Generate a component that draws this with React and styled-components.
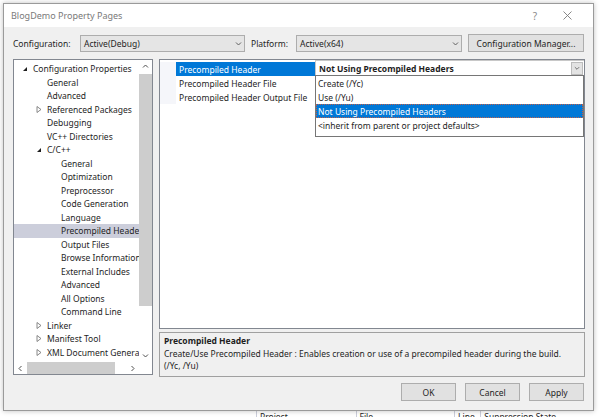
import React from 'react';
import styled, { createGlobalStyle } from 'styled-components';

const GlobalStyle = createGlobalStyle`
  html, body {
    margin: 0;
    padding: 0;
  }
  body {
    width: 600px;
    height: 417px;
    overflow: hidden;
    background: #ffffff;
    font-family: "Noto Sans", "Open Sans", sans-serif;
    color: #1e1e1e;
  }
`;

const Desktop = styled.div`
  position: relative;
  width: 600px;
  height: 417px;
  overflow: hidden;
  background: #ffffff;
  display: flex;
  flex-direction: column;
  justify-content: flex-end;
`;

/* bits of the IDE window behind the dialog */
const ErrorListHeader = styled.div`
  display: flex;
  height: 6px;
  padding-left: 256px;
  font-size: 8.5px;
  line-height: 12px;
  overflow: hidden;
  color: #1e1e1e;
`;

const HeaderCell = styled.div`
  width: ${p => p.w}px;
  padding-left: 3px;
  border-left: 1px solid #cccedb;
  white-space: nowrap;
`;

const Dialog = styled.div`
  position: absolute;
  left: 3px;
  top: 3px;
  width: 589px;
  height: 406px;
  background: #f0f0f0;
  border: 1px solid #9a9a9a;
  box-shadow: 0 0 5px rgba(0, 0, 0, 0.25);
  display: flex;
  flex-direction: column;
  font-size: 8.5px;
`;

const TitleBar = styled.div`
  height: 23px;
  background: #ffffff;
  display: flex;
  align-items: center;
  padding-left: 7px;
  padding-right: 10px;
  color: #7a7a7a;
  font-size: 9px;
`;

const Title = styled.div`
  flex: 1;
`;

const TitleButton = styled.div`
  width: 32px;
  display: flex;
  justify-content: center;
  color: #8a8a8a;
  font-size: 10px;
`;

const Body = styled.div`
  flex: 1;
  display: flex;
  flex-direction: column;
  padding: 7px 8px 0 9px;
`;

const TopRow = styled.div`
  display: flex;
  align-items: center;
  height: 18px;
`;

const Label = styled.div`
  width: ${p => p.w}px;
  margin-left: ${p => p.ml || 0}px;
`;

const Combo = styled.div`
  width: ${p => p.w}px;
  height: 15px;
  box-sizing: content-box;
  border: 1px solid #adadad;
  background: #e5e5e5;
  display: flex;
  align-items: center;
  padding-left: 3px;
`;

const ComboText = styled.div`
  flex: 1;
  white-space: nowrap;
`;

const ComboArrow = styled.div`
  width: 12px;
  display: flex;
  justify-content: center;
  align-items: center;
  color: #606060;
`;

const PushButton = styled.div`
  width: ${p => p.w}px;
  height: 16px;
  border: 1px solid #adadad;
  background: #e1e1e1;
  display: flex;
  align-items: center;
  justify-content: center;
  margin-left: ${p => p.ml || 0}px;
  white-space: nowrap;
`;

const Main = styled.div`
  display: flex;
  gap: 6px;
  margin-top: 7px;
  height: 318px;
`;

const TreePanel = styled.div`
  width: 138px;
  height: 314px;
  border: 1px solid #828790;
  background: #ffffff;
  display: grid;
  grid-template-columns: 125px 13px;
  grid-template-rows: 1fr 12px;
`;

const TreeList = styled.div`
  padding-top: 2px;
  overflow: hidden;
`;

const TreeRow = styled.div`
  height: 13.5px;
  display: flex;
  align-items: center;
  padding-left: ${p => 8 + p.level * 14}px;
  background: ${p => (p.selected ? '#cccedb' : 'transparent')};
  white-space: nowrap;
  color: #1e1e1e;
`;

const Expander = styled.div`
  width: 11px;
  flex-shrink: 0;
  display: flex;
  align-items: center;
`;

const TreeText = styled.span`
  flex-shrink: 0;
`;

const VScroll = styled.div`
  display: flex;
  flex-direction: column;
  align-items: center;
  background: #ffffff;
`;

const ScrollArrow = styled.div`
  height: 13px;
  width: 100%;
  display: flex;
  align-items: center;
  justify-content: center;
`;

const VTrack = styled.div`
  flex: 1;
  width: 100%;
  display: flex;
  flex-direction: column;
`;

const VThumb = styled.div`
  margin-top: 1px;
  height: 232px;
  width: 100%;
  background: #cdcdcd;
`;

const HScroll = styled.div`
  display: flex;
  align-items: stretch;
`;

const HArrow = styled.div`
  width: 13px;
  display: flex;
  align-items: center;
  justify-content: center;
`;

const HTrack = styled.div`
  flex: 1;
  display: flex;
`;

const HThumb = styled.div`
  width: 88px;
  background: #cdcdcd;
`;

const Corner = styled.div`
  background: #ffffff;
`;

const RightColumn = styled.div`
  width: 426px;
  display: flex;
  flex-direction: column;
  gap: 3px;
`;

const GridPanel = styled.div`
  position: relative;
  flex: 1;
  box-sizing: border-box;
  border: 1px solid #828790;
  background: #ffffff;
  padding-top: 2px;
`;

const GridRow = styled.div`
  display: grid;
  grid-template-columns: 16px 139px 1fr;
  height: 14px;
`;

const Gutter = styled.div`
  background: #f5f6fa;
`;

const NameCell = styled.div`
  display: flex;
  align-items: center;
  padding-left: 3px;
  background: ${p => (p.selected ? '#0078d7' : '#ffffff')};
  color: ${p => (p.selected ? '#ffffff' : '#1e1e1e')};
  white-space: nowrap;
  overflow: hidden;
`;

const ValueCell = styled.div`
  display: flex;
  align-items: center;
  border: ${p => (p.editing ? '1px solid #c8c8c8' : 'none')};
  border-right: none;
  margin-top: ${p => (p.editing ? '-2px' : '0')};
  padding-left: 3px;
  font-weight: ${p => (p.editing ? 700 : 400)};
`;

const DropButton = styled.div`
  width: 10px;
  height: 11px;
  margin-right: 1px;
  border: 1px solid #bcbcbc;
  background: #e3e3e3;
  display: flex;
  align-items: center;
  justify-content: center;
`;

const DropList = styled.div`
  position: absolute;
  left: 155px;
  top: 15px;
  width: 267px;
  height: 58px;
  border: 1px solid #767676;
  background: #ffffff;
  padding-bottom: 2px;
`;

const DropItem = styled.div`
  height: 14px;
  display: flex;
  align-items: center;
  padding-left: 2px;
  background: ${p => (p.selected ? '#0078d7' : '#ffffff')};
  color: ${p => (p.selected ? '#ffffff' : '#1e1e1e')};
  outline: ${p => (p.selected ? '1px dotted #c0604a' : 'none')};
  outline-offset: -1px;
  white-space: nowrap;
`;

const DescPanel = styled.div`
  height: 45px;
  box-sizing: border-box;
  border: 1px solid #a0a0a0;
  background: #f0f0f0;
  padding: 2px 4px;
  line-height: 12.5px;
  white-space: nowrap;
`;

const DescTitle = styled.div`
  font-weight: 700;
`;

const Footer = styled.div`
  display: flex;
  justify-content: flex-end;
  gap: 9px;
  padding: 6px 1px 0 0;
`;

const Chevron = ({ dir = 'down', size = 7, color = '#606060' }) => {
  const paths = {
    down: 'M1 2.5 L3.5 5 L6 2.5',
    up: 'M1 4.5 L3.5 2 L6 4.5',
    left: 'M4.5 1 L2 3.5 L4.5 6',
    right: 'M2.5 1 L5 3.5 L2.5 6',
  };
  return (
    <svg width={size} height={size} viewBox="0 0 7 7">
      <path d={paths[dir]} fill="none" stroke={color} strokeWidth="1" />
    </svg>
  );
};

const ExpandedIcon = () => (
  <svg width="6" height="6" viewBox="0 0 6 6">
    <path d="M5 1 L5 5 L1 5 Z" fill="#1e1e1e" />
  </svg>
);

const CollapsedIcon = () => (
  <svg width="6" height="7" viewBox="0 0 6 7">
    <path d="M1 0.5 L5 3.5 L1 6.5 Z" fill="none" stroke="#7a7a7a" strokeWidth="0.9" />
  </svg>
);

const treeItems = [
  { label: 'Configuration Properties', level: 0, expander: 'open' },
  { label: 'General', level: 1 },
  { label: 'Advanced', level: 1 },
  { label: 'Referenced Packages', level: 1, expander: 'closed' },
  { label: 'Debugging', level: 1 },
  { label: 'VC++ Directories', level: 1 },
  { label: 'C/C++', level: 1, expander: 'open' },
  { label: 'General', level: 2 },
  { label: 'Optimization', level: 2 },
  { label: 'Preprocessor', level: 2 },
  { label: 'Code Generation', level: 2 },
  { label: 'Language', level: 2 },
  { label: 'Precompiled Header', level: 2, selected: true },
  { label: 'Output Files', level: 2 },
  { label: 'Browse Information', level: 2 },
  { label: 'External Includes', level: 2 },
  { label: 'Advanced', level: 2 },
  { label: 'All Options', level: 2 },
  { label: 'Command Line', level: 2 },
  { label: 'Linker', level: 1, expander: 'closed' },
  { label: 'Manifest Tool', level: 1, expander: 'closed' },
  { label: 'XML Document Generator', level: 1, expander: 'closed' },
];

const properties = [
  { name: 'Precompiled Header', value: 'Not Using Precompiled Headers', selected: true },
  { name: 'Precompiled Header File', value: '' },
  { name: 'Precompiled Header Output File', value: '' },
];

const options = [
  'Create (/Yc)',
  'Use (/Yu)',
  'Not Using Precompiled Headers',
  '<inherit from parent or project defaults>',
];

export default function App() {
  return (
    <>
      <GlobalStyle />
      <Desktop>
        <ErrorListHeader>
          <HeaderCell w={99}>Project</HeaderCell>
          <HeaderCell w={98}>File</HeaderCell>
          <HeaderCell w={23}>Line</HeaderCell>
          <HeaderCell w={120}>Suppression State</HeaderCell>
        </ErrorListHeader>

        <Dialog>
          <TitleBar>
            <Title>BlogDemo Property Pages</Title>
            <TitleButton>?</TitleButton>
            <TitleButton>
              <svg width="9" height="9" viewBox="0 0 9 9">
                <path d="M0.5 0.5 L8.5 8.5 M8.5 0.5 L0.5 8.5" stroke="#7a7a7a" strokeWidth="0.9" />
              </svg>
            </TitleButton>
          </TitleBar>

          <Body>
            <TopRow>
              <Label w={67}>Configuration:</Label>
              <Combo w={160}>
                <ComboText>Active(Debug)</ComboText>
                <ComboArrow><Chevron /></ComboArrow>
              </Combo>
              <Label w={45} ml={6}>Platform:</Label>
              <Combo w={161}>
                <ComboText>Active(x64)</ComboText>
                <ComboArrow><Chevron /></ComboArrow>
              </Combo>
              <PushButton w={114} ml={6}>Configuration Manager...</PushButton>
            </TopRow>

            <Main>
              <TreePanel>
                <TreeList>
                  {treeItems.map((item, i) => (
                    <TreeRow key={i} level={item.level} selected={item.selected}>
                      <Expander>
                        {item.expander === 'open' && <ExpandedIcon />}
                        {item.expander === 'closed' && <CollapsedIcon />}
                      </Expander>
                      <TreeText>{item.label}</TreeText>
                    </TreeRow>
                  ))}
                </TreeList>
                <VScroll>
                  <ScrollArrow><Chevron dir="up" color="#505050" /></ScrollArrow>
                  <VTrack>
                    <VThumb />
                  </VTrack>
                  <ScrollArrow><Chevron dir="down" color="#505050" /></ScrollArrow>
                </VScroll>
                <HScroll>
                  <HArrow><Chevron dir="left" color="#505050" /></HArrow>
                  <HTrack>
                    <HThumb />
                  </HTrack>
                  <HArrow><Chevron dir="right" color="#505050" /></HArrow>
                </HScroll>
                <Corner />
              </TreePanel>

              <RightColumn>
                <GridPanel>
                  {properties.map((p, i) => (
                    <GridRow key={i}>
                      <Gutter />
                      <NameCell selected={p.selected}>{p.name}</NameCell>
                      <ValueCell editing={p.selected}>
                        <ComboText>{p.value}</ComboText>
                        {p.selected && (
                          <DropButton><Chevron size={6} /></DropButton>
                        )}
                      </ValueCell>
                    </GridRow>
                  ))}
                  <DropList>
                    {options.map((o, i) => (
                      <DropItem key={i} selected={i === 2}>{o}</DropItem>
                    ))}
                  </DropList>
                </GridPanel>

                <DescPanel>
                  <DescTitle>Precompiled Header</DescTitle>
                  <div>Create/Use Precompiled Header : Enables creation or use of a precompiled header during the build.</div>
                  <div>(/Yc, /Yu)</div>
                </DescPanel>
              </RightColumn>
            </Main>

            <Footer>
              <PushButton w={53}>OK</PushButton>
              <PushButton w={53}>Cancel</PushButton>
              <PushButton w={53}>Apply</PushButton>
            </Footer>
          </Body>
        </Dialog>
      </Desktop>
    </>
  );
}
